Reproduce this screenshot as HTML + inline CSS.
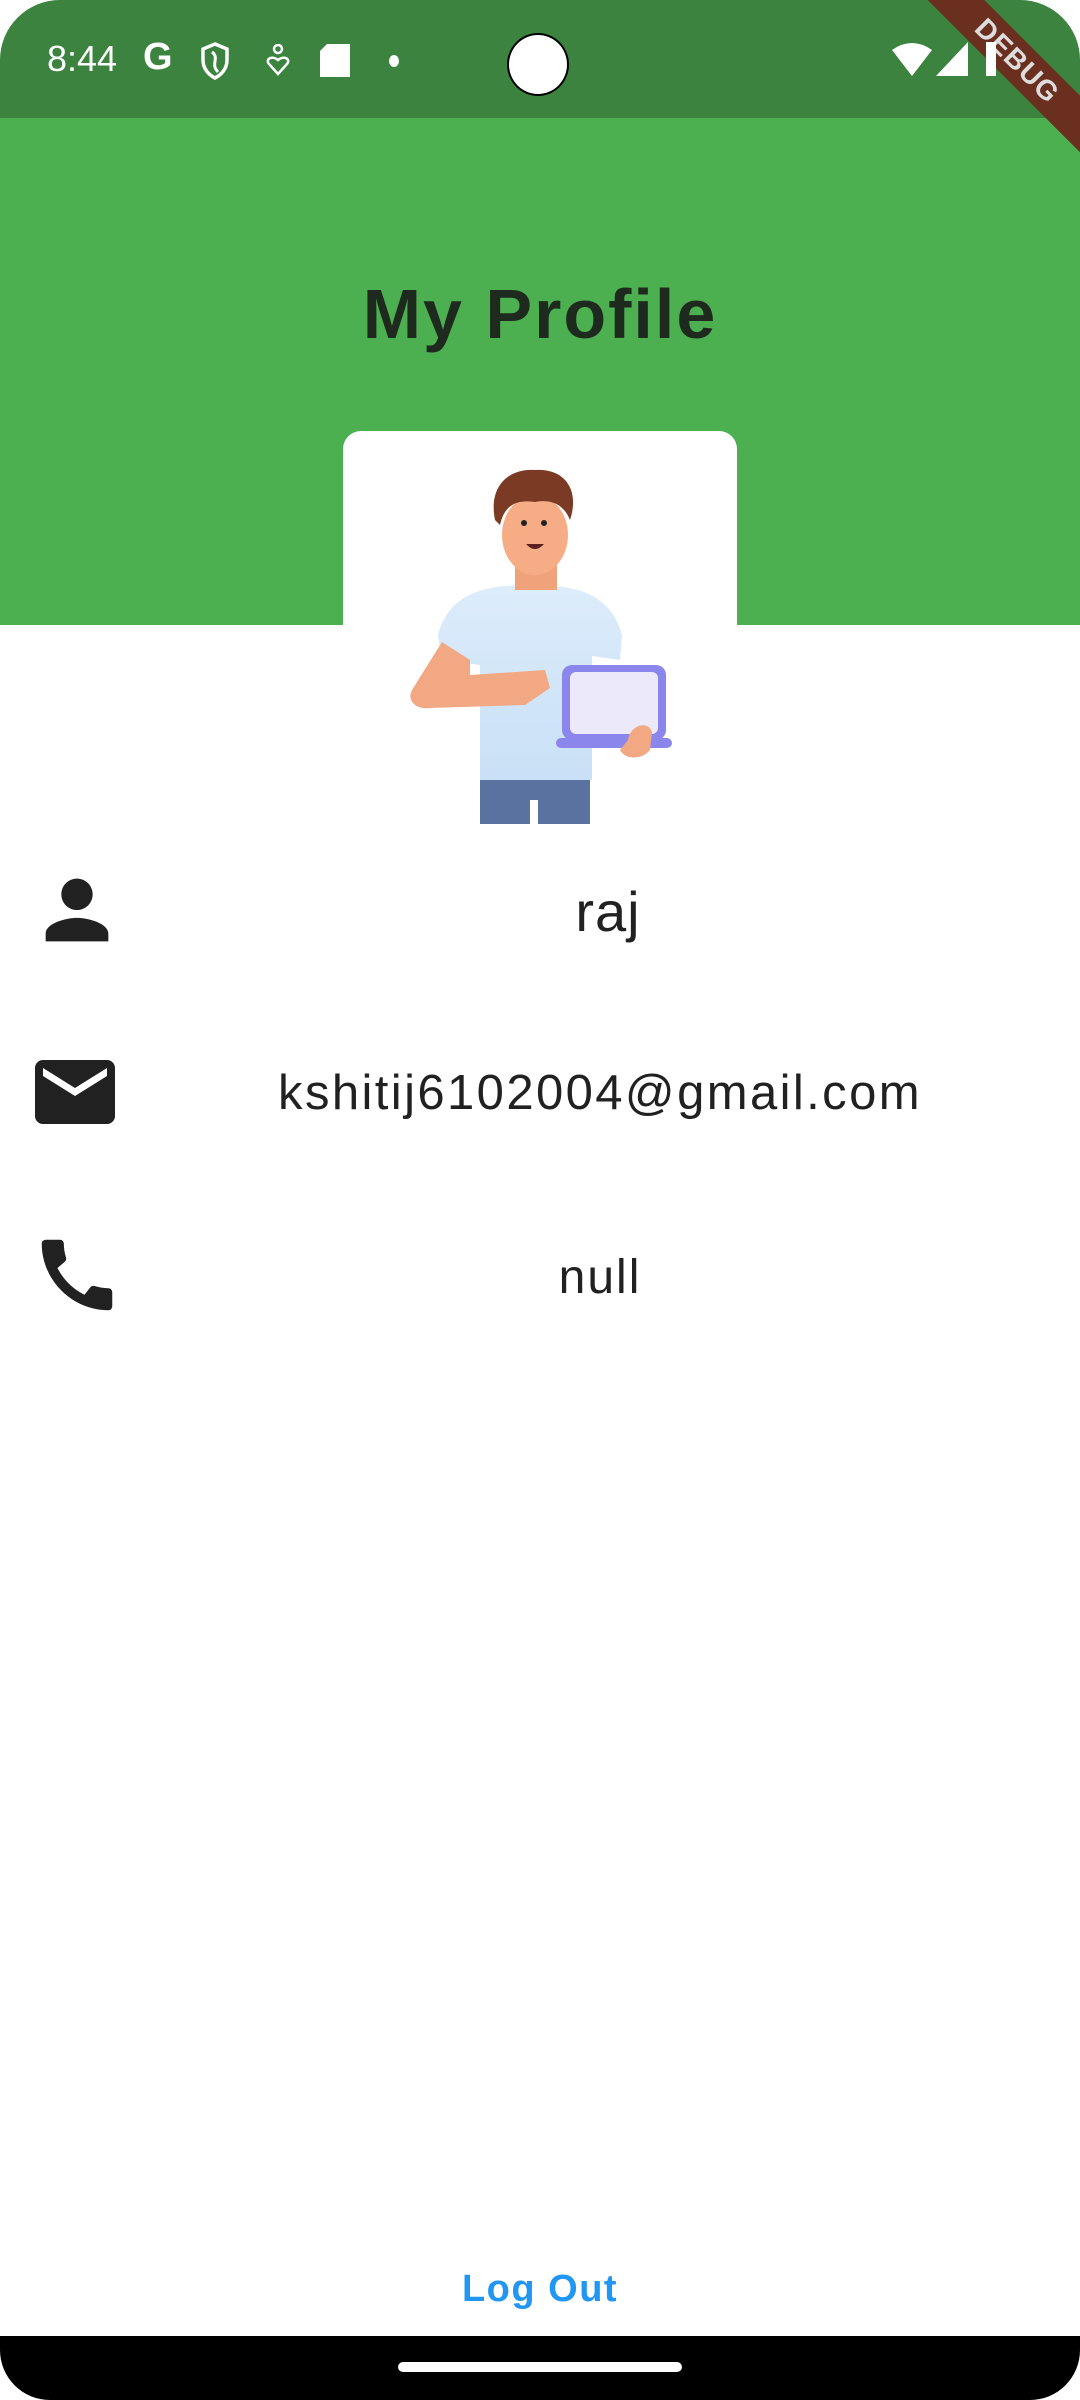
<!DOCTYPE html>
<html><head><meta charset="utf-8"><style>
html,body{margin:0;padding:0}
body{width:1080px;height:2400px;position:relative;overflow:hidden;background:#fff;font-family:"Liberation Sans",sans-serif;color:#212121}
.abs{position:absolute}
</style></head><body>
<div class="abs" style="left:0;top:0;width:1080px;height:625px;overflow:hidden;border-radius:60px 60px 0 0">
<div class="abs" style="left:0;top:0;width:1080px;height:118px;background:#3b833e"></div>
<div class="abs" style="left:0;top:118px;width:1080px;height:507px;background:#4caf50"></div>
<div class="abs" style="left:867px;top:41px;width:300px;height:40px;background:#6b2f1f;transform:rotate(45deg);color:#ddd;font-weight:bold;font-size:28px;text-align:center;line-height:40px;letter-spacing:1px">DEBUG</div>
</div>
<!-- status bar -->
<div class="abs" style="left:47px;top:38px;font-size:36px;color:#fff">8:44</div>
<div class="abs" style="left:143px;top:36px;font-size:38px;font-weight:bold;color:#fff">G</div>
<svg class="abs" style="left:200px;top:42px" width="30" height="38" viewBox="0 0 30 38"><path d="M15 2 L27 7 V18 C27 27 21 33 15 36 C9 33 3 27 3 18 V7 Z" fill="none" stroke="#fff" stroke-width="3.5"/><path d="M12 10 C20 16 10 22 18 30" fill="none" stroke="#fff" stroke-width="3"/></svg>
<svg class="abs" style="left:265px;top:44px" width="26" height="32" viewBox="0 0 26 32"><circle cx="13" cy="5" r="4" fill="none" stroke="#fff" stroke-width="2.5"/><path d="M13 30 L4 20 C0 15 7 11 13 16 C19 11 26 15 22 20 Z" fill="none" stroke="#fff" stroke-width="2.5"/></svg>
<svg class="abs" style="left:320px;top:44px" width="30" height="33"><path d="M7 0 H30 V33 H0 V7 Z" fill="#fff"/></svg>
<div class="abs" style="left:389px;top:55px;width:10px;height:12px;border-radius:50%;background:#fff"></div>
<div class="abs" style="left:507px;top:33px;width:62px;height:63px;border-radius:50%;background:#fff;border:2.5px solid #000;box-sizing:border-box"></div>
<svg class="abs" style="left:892px;top:42px" width="40" height="34"><path d="M0 8 Q20 -6 40 8 L20 34 Z" fill="#fff"/></svg>
<svg class="abs" style="left:936px;top:42px" width="32" height="34"><path d="M32 0 V34 H0 Z" fill="#fff"/></svg>
<div class="abs" style="left:986px;top:42px;width:10px;height:34px;background:#fff"></div>
<!-- title -->
<div class="abs" style="left:0;top:274px;width:1080px;text-align:center;font-size:70px;font-weight:bold;color:#1f2a1f;letter-spacing:2px">My Profile</div>
<!-- card -->
<div class="abs" style="left:343px;top:431px;width:394px;height:260px;background:#fff;border-radius:18px"></div>
<svg class="abs" style="left:330px;top:420px" width="420" height="420" viewBox="0 0 420 420">
<defs><linearGradient id="sh" x1="0" y1="0" x2="0" y2="1"><stop offset="0" stop-color="#dcecfb"/><stop offset="1" stop-color="#c9e0f6"/></linearGradient></defs>
<rect x="150" y="355" width="110" height="49" fill="#5a72a0"/>
<rect x="200" y="380" width="8" height="24" fill="#fff"/>
<path d="M108 215 C120 170 160 165 200 165 C240 165 280 170 292 215 L290 240 L262 236 L262 360 L150 360 L150 245 L112 240 Z" fill="url(#sh)"/>
<path d="M112 222 L82 270 C76 282 88 290 100 288 L195 285 L220 268 L215 250 L140 255 L140 240 Z" fill="#f2a882"/>
<rect x="185" y="135" width="42" height="35" fill="#f0a27a"/>
<ellipse cx="205" cy="115" rx="33" ry="40" fill="#f6ad86"/>
<path d="M165 100 C158 65 180 48 205 50 C235 48 250 70 240 100 C232 80 215 80 205 82 C190 80 175 82 170 105 Z" fill="#7a3a24"/>
<circle cx="194" cy="103" r="3" fill="#222"/><circle cx="214" cy="103" r="3" fill="#222"/>
<path d="M196 124 Q205 134 214 124 Z" fill="#5a1f20"/>
<rect x="232" y="245" width="104" height="75" rx="10" fill="#8a86ec"/>
<rect x="240" y="252" width="88" height="62" rx="6" fill="#ece9fb"/>
<rect x="226" y="318" width="116" height="10" rx="5" fill="#8a86ec"/>
<path d="M298 320 C300 305 318 300 322 312 L320 330 C312 340 295 340 290 330 Z" fill="#f2a882"/>
</svg>
<!-- rows -->
<svg class="abs" style="left:30px;top:863px" width="94" height="94" viewBox="0 0 24 24"><path fill="#212121" d="M12 12c2.21 0 4-1.79 4-4s-1.79-4-4-4-4 1.79-4 4 1.79 4 4 4zm0 2c-2.67 0-8 1.34-8 4v2h16v-2c0-2.66-5.33-4-8-4z"/></svg>
<div class="abs" style="left:408px;top:879px;width:400px;text-align:center;font-size:56px;letter-spacing:1px">raj</div>
<svg class="abs" style="left:27px;top:1044px" width="96" height="96" viewBox="0 0 24 24"><path fill="#212121" d="M20 4H4c-1.1 0-2 .9-2 2v12c0 1.1.9 2 2 2h16c1.1 0 2-.9 2-2V6c0-1.1-.9-2-2-2zm0 4l-8 5-8-5V6l8 5 8-5v2z"/></svg>
<div class="abs" style="left:150px;top:1065px;width:900px;text-align:center;font-size:49px;letter-spacing:2.4px">kshitij6102004@gmail.com</div>
<svg class="abs" style="left:30px;top:1228px" width="94" height="94" viewBox="0 0 24 24"><path fill="#212121" d="M20.01 15.38c-1.23 0-2.42-.2-3.53-.56-.35-.12-.74-.03-1.01.24l-1.57 1.97c-2.83-1.35-5.48-3.9-6.89-6.83l1.95-1.66c.27-.28.35-.67.24-1.02-.37-1.11-.56-2.3-.56-3.53 0-.54-.45-.99-.99-.99H4.19C3.65 3 3 3.24 3 3.99 3 13.28 10.73 21 20.01 21c.71 0 .99-.63.99-1.18v-3.45c0-.54-.45-.99-.99-.99z"/></svg>
<div class="abs" style="left:400px;top:1250px;width:400px;text-align:center;font-size:48px;letter-spacing:2px">null</div>
<!-- logout -->
<div class="abs" style="left:0;top:2268px;width:1080px;text-align:center;font-size:38px;font-weight:bold;color:#2196f3;letter-spacing:1.5px">Log Out</div>
<div class="abs" style="left:0;top:2336px;width:1080px;height:64px;background:#000;border-radius:0 0 50px 50px"></div>
<div class="abs" style="left:398px;top:2362px;width:284px;height:10px;border-radius:5px;background:#fff"></div>
</body></html>
